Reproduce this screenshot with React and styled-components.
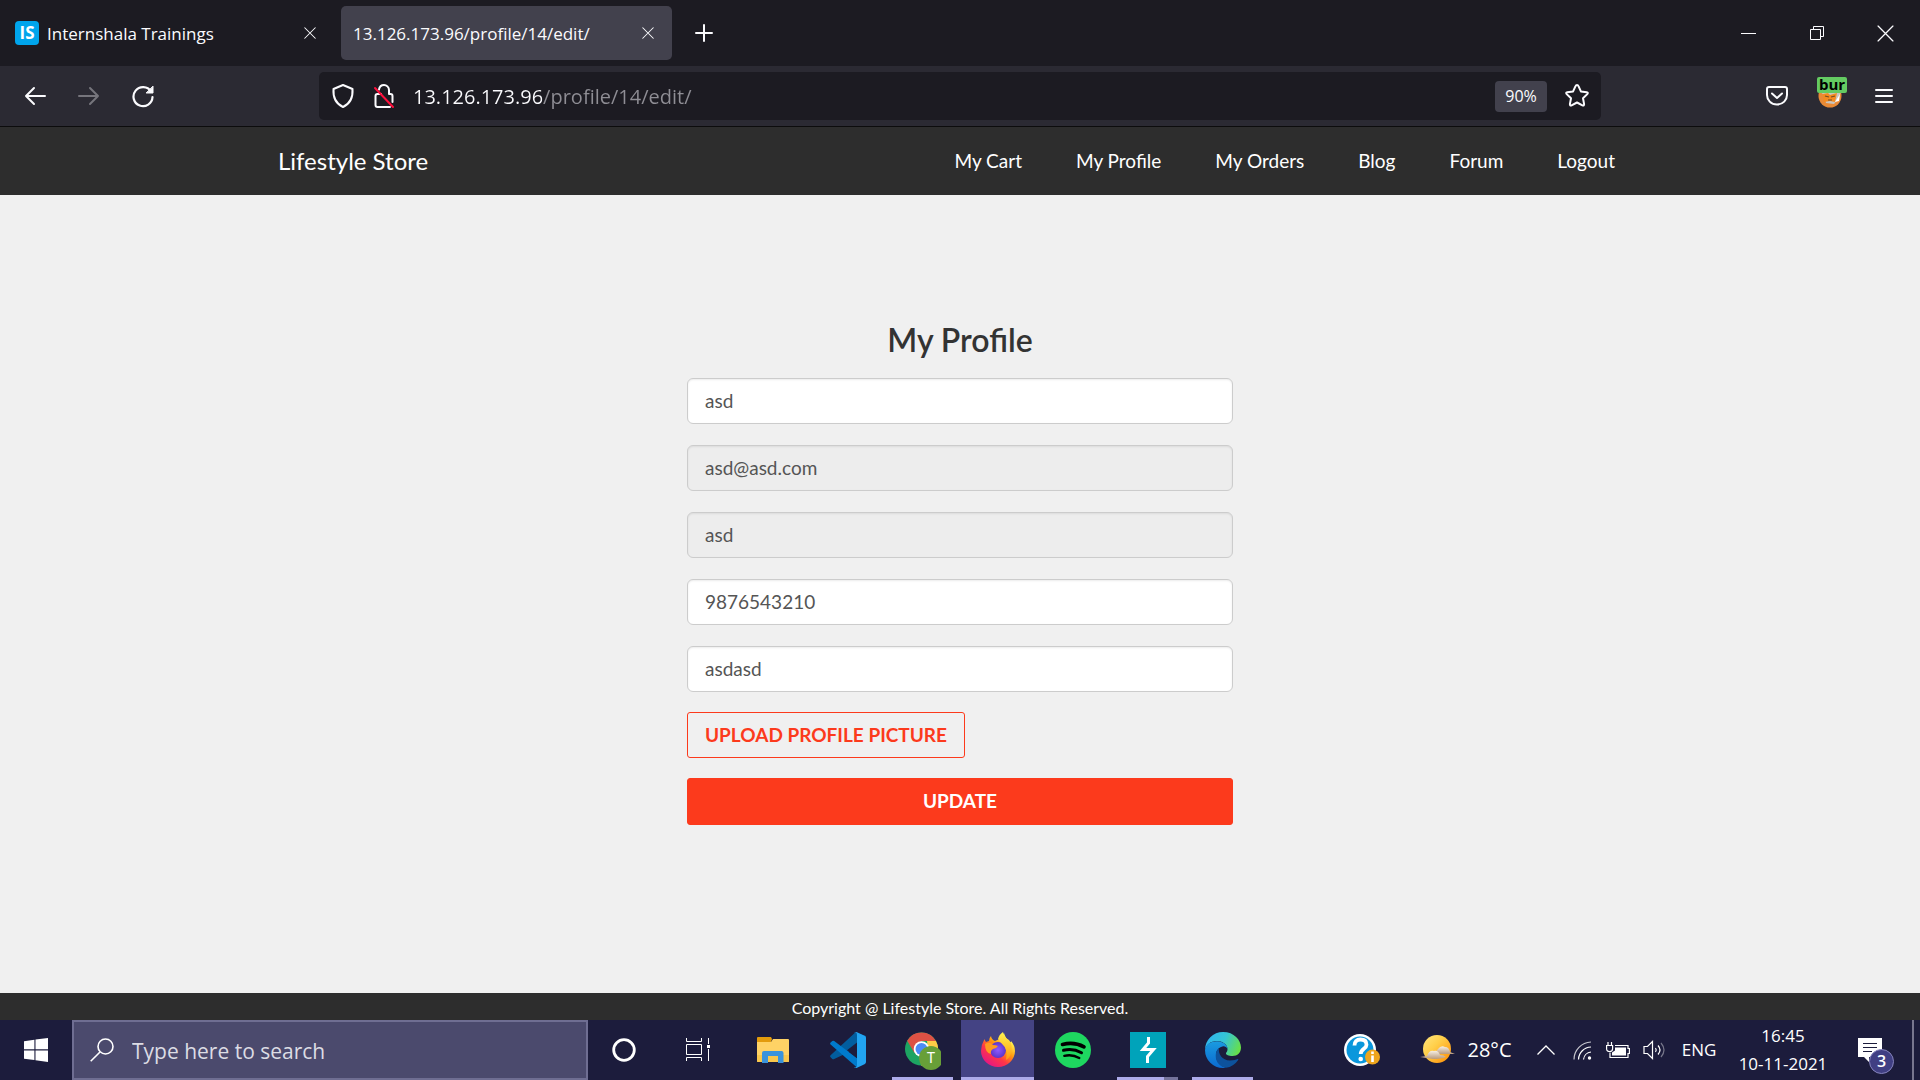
import React from "react";
import styled, { createGlobalStyle } from "styled-components";

const ui = '"Open Sans", "Noto Sans", sans-serif';
const site = 'Lato, "Open Sans", sans-serif';

const Global = createGlobalStyle`
  * { box-sizing: border-box; }
  body { margin: 0; font-family: ${ui}; background: #f0f0f0; }
  button, input { font: inherit; margin: 0; }
  svg { display: block; flex: none; }
`;

const Screen = styled.div`
  min-height: 100vh;
  display: flex;
  flex-direction: column;
`;

/* Browser window */
const TabStrip = styled.div`
  display: flex;
  align-items: center;
  height: 66px;
  background: #1c1b22;
  color: #fbfbfe;
`;
const Tab = styled.div`
  display: flex;
  align-items: center;
  gap: 8px;
  width: ${(p) => (p.$active ? 331 : 327)}px;
  height: 54px;
  margin-right: ${(p) => (p.$active ? 0 : 14)}px;
  padding: ${(p) => (p.$active ? "0 12px" : "0 5px 0 15px")};
  border-radius: 5px;
  background: ${(p) => (p.$active ? "#42414d" : "transparent")};
  font-size: 17px;
`;
const TabTitle = styled.span`
  flex: 1;
  white-space: nowrap;
`;
const Favicon = styled.span`
  width: 24px;
  height: 24px;
  border-radius: 4px;
  background: #00a5ec;
  color: #fff;
  font: 700 17px/24px ${ui};
  text-align: center;
`;
const IconButton = styled.button`
  display: flex;
  align-items: center;
  justify-content: center;
  width: ${(p) => p.$w || 24}px;
  height: ${(p) => p.$h || 24}px;
  padding: 0;
  border: 0;
  background: transparent;
  color: ${(p) => (p.$dim ? "#76757c" : "#fbfbfe")};
`;
const WindowControls = styled.div`
  display: flex;
  margin-left: auto;
`;
const Toolbar = styled.div`
  display: flex;
  align-items: center;
  height: 61px;
  padding: 0 11px 0 8px;
  background: #2b2a33;
  border-bottom: 1px solid #0c0c0d;
`;
const History = styled.div`
  display: flex;
  flex: 0 0 311px;
`;
const AddressBar = styled.div`
  display: flex;
  align-items: center;
  flex: 1;
  max-width: 1282px;
  height: 48px;
  padding: 0 12px;
  border-radius: 5px;
  background: #1c1b22;
`;
const AddressInput = styled.input`
  flex: 1;
  min-width: 0;
  height: 32px;
  padding: 0;
  border: 0;
  outline: 0;
  font-size: 20px;
  color: transparent;
  background: linear-gradient(90deg, #fbfbfe 129px, #8f8e95 129px);
  background-clip: text;
  -webkit-background-clip: text;
`;
const Zoom = styled.button`
  width: 52px;
  height: 31px;
  margin-right: 18px;
  padding: 0;
  border: 0;
  border-radius: 4px;
  background: #42414d;
  color: #fbfbfe;
  font-size: 16px;
`;
const Extensions = styled.div`
  display: flex;
  align-items: center;
  gap: 4px;
  margin-left: auto;
`;
const ExtensionButton = styled(IconButton)`
  position: relative;
`;
const ExtensionBadge = styled.span`
  position: absolute;
  top: -1px;
  left: 12px;
  width: 30px;
  height: 16px;
  border-radius: 2px;
  background: #64cb62;
  color: #000;
  font: 700 15px/15px ${ui};
  text-align: center;
`;

/* Store page */
const Header = styled.header`
  background: #2d2d2d;
`;
const HeaderInner = styled.div`
  display: flex;
  align-items: center;
  justify-content: space-between;
  max-width: 1364px;
  height: 68px;
  margin: 0 auto;
  padding-bottom: 2px;
  font-family: ${site};
`;
const Brand = styled.a`
  color: #fff;
  font-size: 24px;
  text-decoration: none;
`;
const Nav = styled.nav`
  display: flex;
`;
const NavLink = styled.a`
  padding: 0 27px;
  color: #fff;
  font-size: 19px;
  text-decoration: none;
`;
const Main = styled.main`
  flex: 1;
  padding: 122px 20px 0;
  background: #f0f0f0;
  font-family: ${site};
`;
const Form = styled.form`
  display: flex;
  flex-direction: column;
  align-items: flex-start;
  gap: 21px;
  width: 100%;
  max-width: 546px;
  margin: 0 auto;
`;
const Title = styled.h1`
  align-self: center;
  margin: 0 0 -6px;
  color: #333;
  font-size: 32px;
  font-weight: 600;
  line-height: 46px;
`;
const Field = styled.input`
  width: 100%;
  height: 46px;
  padding: 0 17px 2px;
  border: 1px solid #ccc;
  border-radius: 6px;
  background: #fff;
  box-shadow: inset 0 1px 2px rgba(0, 0, 0, 0.08);
  color: #555;
  font-size: 19px;
  &:disabled { background: #ededed; }
`;
const FormButton = styled.button`
  width: ${(p) => (p.$solid ? "100%" : "auto")};
  height: ${(p) => (p.$solid ? 47 : 46)}px;
  margin-top: -1px;
  padding: 0 17px 2px;
  border: 1px solid #fc3a1c;
  border-radius: 3px;
  background: ${(p) => (p.$solid ? "#fc3a1c" : "transparent")};
  color: ${(p) => (p.$solid ? "#fff" : "#fc3a1c")};
  font-size: 19px;
  font-weight: 700;
`;
const Footer = styled.footer`
  height: 27px;
  padding-top: 4px;
  background: #2d2d2d;
  color: #fff;
  font: 16px/22px ${site};
  text-align: center;
`;

/* Taskbar */
const Taskbar = styled.div`
  display: flex;
  height: 60px;
  background: #1c1c3c;
  color: #fff;
`;
const Search = styled.label`
  display: flex;
  align-items: center;
  gap: 18px;
  flex: 0 1 516px;
  padding: 0 16px;
  border: 2px solid #6f6e92;
  background: #4b4a6d;
`;
const SearchInput = styled.input`
  flex: 1;
  min-width: 0;
  padding: 2px 0 0;
  border: 0;
  outline: 0;
  background: transparent;
  color: #fff;
  font-size: 21px;
  &::placeholder { color: #dcdce4; opacity: 1; }
`;
const Apps = styled.div`
  display: flex;
  gap: 2px;
`;
const AppButton = styled.button`
  display: flex;
  flex-direction: column;
  align-items: center;
  justify-content: space-between;
  width: ${(p) => p.$w || 73}px;
  padding: 0;
  border: 0;
  background: ${(p) => (p.$active ? "#444384" : "transparent")};
`;
const AppIcon = styled.span`
  display: flex;
  align-items: center;
  height: 60px;
  margin-bottom: -3px;
`;
const Underline = styled.span`
  width: ${(p) => (p.$full ? "100%" : "61px")};
  height: 3px;
  background: ${(p) => (p.$stacked ? "linear-gradient(90deg, #adabea 47px, #74739b 47px)" : "#adabea")};
`;
const Tray = styled.div`
  display: flex;
  align-items: center;
  margin-left: auto;
`;
const TrayButton = styled.button`
  display: flex;
  align-items: center;
  justify-content: center;
  gap: 12px;
  width: ${(p) => p.$w}px;
  height: 60px;
  padding: 0;
  border: 0;
  background: transparent;
  color: #fff;
  font-size: ${(p) => p.$size || 17}px;
  line-height: 28px;
  white-space: nowrap;
`;
const Desktop = styled.button`
  width: 8px;
  height: 60px;
  padding: 0;
  border: 0;
  border-left: 2px solid #77768f;
  background: transparent;
`;
const NoticeButton = styled(TrayButton)`
  position: relative;
  padding-right: 12px;
`;
const NoticeCount = styled.span`
  position: absolute;
  left: 29px;
  top: 29px;
  width: 25px;
  height: 25px;
  border: 1px solid #8684bd;
  border-radius: 50%;
  background: #403f83;
  font: 600 16px/22px ${ui};
`;

const line = { fill: "none", stroke: "currentColor", strokeWidth: 2, strokeLinecap: "round", strokeLinejoin: "round" };

const Cross = ({ size, w = 1.4 }) => (
  <svg width={size} height={size} viewBox="0 0 16 16" {...line} strokeWidth={w}><path d="M1 1l14 14M15 1L1 15" /></svg>
);
const Plus = () => (
  <svg width="18" height="18" viewBox="0 0 18 18" {...line}><path d="M9 1v16M1 9h16" /></svg>
);
const Minimize = () => (
  <svg width="15" height="15" viewBox="0 0 15 15"><path d="M0 7h15v1H0z" fill="currentColor" /></svg>
);
const Restore = () => (
  <svg width="14" height="14" viewBox="0 0 14 14" fill="none" stroke="currentColor"><path d="M.5 3.500h10v10H.5zM3.500 3.500v-3h10v10h-3" /></svg>
);
const Back = () => (
  <svg width="22" height="20" viewBox="0 0 22 20" {...line}><path d="M10 2L2 10l8 8M2 10h19" /></svg>
);
const Forward = () => (
  <svg width="22" height="20" viewBox="0 0 22 20" {...line}><path d="M12 2l8 8-8 8M20 10H1" /></svg>
);
const Reload = () => (
  <svg width="24" height="24" viewBox="0 0 24 24" {...line} strokeWidth="2.2">
    <path d="M20 7.500A9.500 9.500 0 1 0 21.500 13" /><path d="M22 2.500V9h-6.500z" fill="currentColor" strokeWidth="1" />
  </svg>
);
const Shield = () => (
  <svg width="24" height="26" viewBox="0 0 24 26" {...line}><path d="M12 2l9.500 4C22 13 19.500 20.500 12 24 4.500 20.500 2 13 2.500 6z" /></svg>
);
const Lock = () => (
  <svg width="22" height="26" viewBox="0 0 22 26" {...line}>
    <path d="M6 6.500C6.500 3.500 8.500 2 11 2s5 2 5 5v4h1.500q2 0 2 2v6M8 11H4.500q-2 0-2 2v9q0 2 2 2H17" />
    <path d="M2 5l18 19" stroke="#ff0f3c" />
  </svg>
);
const Star = () => (
  <svg width="26" height="26" viewBox="0 0 26 26" {...line}>
    <path d="M13 2q1 0 1.500 1.200l2.400 5.200 5.800.8q1.900.4.600 1.900l-4.300 4.100 1.100 5.900q.1 2-1.700 1.200L13 19.500l-5.400 2.800q-1.800.8-1.700-1.200L7 15.200l-4.300-4.100q-1.300-1.500.6-1.900l5.800-.8 2.400-5.200Q12 2 13 2z" />
  </svg>
);
const Pocket = () => (
  <svg width="24" height="22" viewBox="0 0 24 22" {...line}>
    <path d="M4 2h16q2 0 2 2v6c0 5-4 9.500-10 9.500S2 15 2 10V4q0-2 2-2z" /><path d="M7 8.500l5 4.500 5-4.500" />
  </svg>
);
const Fox = () => (
  <svg width="24" height="24" viewBox="0 0 24 24">
    <circle cx="12" cy="12" r="11.500" fill="#e98a36" />
    <path d="M1 7l5 4 2 8 8 1 5-6 2-7-4-5H5z" fill="#c9c5bf" />
    <path d="M5 10l5-1 2 2 7-2-2 9-5-1-6 1z" fill="#f58b1f" />
    <path d="M7 12l4 1M13 13l4-1M10 16h4" stroke="#744d26" strokeWidth="1.200" />
    <path d="M17 18l5-8-1 7z" fill="#fff" />
  </svg>
);
const Menu = () => (
  <svg width="18" height="16" viewBox="0 0 18 16" {...line}><path d="M1 2h16M1 8h16M1 14h16" /></svg>
);
const WindowsLogo = () => (
  <svg width="24" height="24" viewBox="0 0 24 24" fill="#fff"><path d="M0 3.300L10.400 1.700V11.300H0zM11.500 1.500L24 0V11.300H11.500zM0 12.400H10.400V22.100L0 20.700zM11.500 12.400H24V24L11.500 22.300z" /></svg>
);
const Magnifier = () => (
  <svg width="24" height="24" viewBox="0 0 24 24" fill="none" stroke="#fff" strokeWidth="1.600"><circle cx="15.500" cy="8.500" r="7.500" /><path d="M10 14L.7 23.300" /></svg>
);
const Cortana = () => (
  <svg width="24" height="24" viewBox="0 0 24 24"><circle cx="12" cy="12" r="10.300" fill="none" stroke="#fff" strokeWidth="2.800" /></svg>
);
const TaskView = () => (
  <svg width="25" height="24" viewBox="0 0 25 24" fill="none" stroke="#fff">
    <path d="M.5 6.500h15v10H.5zM.5 0v3.500h15V0M.5 23v-3.500h15V23M22.500 0v6M22.500 11v12" /><path d="M21 7h3v3h-3z" fill="#fff" stroke="none" />
  </svg>
);
const Folder = () => (
  <svg width="32" height="26" viewBox="0 0 32 26">
    <path d="M0 1q0-1 1-1h13l1 2-1 3H0z" fill="#e39b0c" /><path d="M0 5h14l2-3h15q1 0 1 1v21q0 1-1 1H1q-1 0-1-1z" fill="#ffd265" />
    <path d="M0 18h32v6q0 1-1 1H1q-1 0-1-1z" fill="#f9c74c" />
    <path d="M5 26V16q0-2 2-2h17.500q2 0 2 2v10H21v-7H11v7z" fill="#3a93dc" />
  </svg>
);
const Code = () => (
  <svg width="36" height="36" viewBox="0 0 36 36">
    <path d="M25.500.5L36 4v8L4.200 27q-1 .6-1.900-.1L.6 25.300q-1-1 0-2L24.700 1z" fill="#0065a9" opacity=".9" />
    <path d="M27 35.500L.6 12.600q-1-1 0-2l1.700-1.600q.9-.7 1.900 0L28 27z" fill="#007acc" />
    <path d="M26.500 0l8 3.700Q36 4.500 36 6v24q0 1.500-1.500 2.300l-8 3.700q-1.700.1-2.600-.9 3.100 1.500 3.100-2V3q0-3.500-3-2 1-1 2.500-1z" fill="#22a4f1" />
    <path d="M27 10.500V26l-10-7.800z" fill="#1c1c3c" />
  </svg>
);
const Chrome = () => (
  <svg width="36" height="39" viewBox="0 0 36 39">
    <circle cx="16.500" cy="18" r="16.500" fill="#1da462" />
    <path d="M2.200 9.700A16.500 16.500 0 0 1 31 10H16.500L9.500 22z" fill="#dd5144" />
    <path d="M31 10A16.500 16.500 0 0 1 16 34.500L23.500 22 22 10z" fill="#ffcd46" />
    <circle cx="16.500" cy="18" r="7.800" fill="#fff" /><circle cx="16.500" cy="18" r="6" fill="#4c8bf5" />
    <circle cx="26" cy="27" r="12" fill="#689f38" />
    <text x="26" y="32" textAnchor="middle" fontSize="14" fontFamily="Roboto, sans-serif" fill="#fff">T</text>
  </svg>
);
const Firefox = () => (
  <svg width="34" height="36" viewBox="0 0 34 36">
    <defs>
      <linearGradient id="fxBody" x1=".85" y1=".1" x2=".2" y2=".95"><stop offset=".1" stopColor="#fff44f" /><stop offset=".4" stopColor="#ff980e" /><stop offset=".65" stopColor="#ff3647" /><stop offset="1" stopColor="#e31587" /></linearGradient>
      <radialGradient id="fxGlobe"><stop offset="0" stopColor="#9059ff" /><stop offset="1" stopColor="#5b36c9" /></radialGradient>
      <linearGradient id="fxFlame" x1="0" y1="0" x2="0" y2="1"><stop offset="0" stopColor="#fff44f" /><stop offset="1" stopColor="#ff980e" /></linearGradient>
    </defs>
    <path d="M3.500 7q.5 2 1.500 3l3-1q0-3 2-5 .5 3.500 4 5l7-3Q22 2 23 1q1 5 6 9 1 .5 1-1 4 4.500 4 10A17 16 0 0 1 0 19q0-6 3.500-12z" fill="url(#fxBody)" />
    <circle cx="17" cy="18" r="8" fill="url(#fxGlobe)" />
    <path d="M17 7q1-4.500 5-7 1 5 6 8 4 5 2 13-1 5-5 7 2-11-3-15-3-3-5-6z" fill="url(#fxFlame)" />
    <path d="M4 12q5-3 8 1 3 0 5 1-2 3-5 3-3 2-2 5-6-1-6-10z" fill="#ff9a20" />
  </svg>
);
const Spotify = () => (
  <svg width="36" height="36" viewBox="0 0 36 36" fill="none" stroke="#000" strokeLinecap="round">
    <circle cx="18" cy="18" r="18" fill="#1ed760" stroke="none" />
    <path d="M7.500 12.500q11.500-3 21.500 2.300" strokeWidth="3.600" /><path d="M8.500 18.300q9.500-2.300 18 2.400" strokeWidth="3" /><path d="M9.300 23.800q8-1.900 15 2.200" strokeWidth="2.400" />
  </svg>
);
const Burp = () => (
  <svg width="36" height="36" viewBox="0 0 36 36"><path d="M0 0h36v36H0z" fill="#00a3ba" /><path d="M18.500 5v6L13 17.500h10.500L17.500 24.500V31" fill="none" stroke="#fff" strokeWidth="3" /></svg>
);
const Edge = () => (
  <svg width="36" height="36" viewBox="0 0 36 36">
    <defs>
      <linearGradient id="edTop" x1="0" y1=".3" x2="1" y2=".6"><stop offset="0" stopColor="#2fb5ef" /><stop offset=".5" stopColor="#35c4d5" /><stop offset="1" stopColor="#68e047" /></linearGradient>
      <linearGradient id="edSide" x1="0" y1="0" x2="0" y2="1"><stop offset="0" stopColor="#1a9be0" /><stop offset="1" stopColor="#0b6ad0" /></linearGradient>
    </defs>
    <path d="M0 18A18 18 0 0 1 18 0C29 0 36 8 36 15.500c0 5-3.500 8.500-8.500 8.500-4 0-6.500-1.300-6.500-2.500s1.500-1.500 1.500-4.500C22.500 12 17 9 12 9 5 9 1 13 0 18z" fill="url(#edTop)" />
    <path d="M0 18C1 12 6 9.300 12 9.300c6 0 10.500 3.700 10.500 7.700-1-2-3-3-5-2.500C13 15.500 11 19 11 23c0 7 5 11 9.500 12.800Q19 36 18 36A18 18 0 0 1 0 18z" fill="url(#edSide)" />
    <path d="M14 16.500c-1 5 3 12 11 12 4 0 6-1 7.500-1.500 1-.3 1 .5.500 1.200A18 18 0 0 1 21 35.800C15 35 10.700 30 10.700 24c0-3.500 1-6 3.300-7.500z" fill="#0d529c" />
  </svg>
);
const Help = () => (
  <svg width="36" height="32" viewBox="0 0 36 32">
    <circle cx="16" cy="16" r="16" fill="#fff" /><circle cx="16" cy="16" r="13.500" fill="#0a97dc" />
    <path d="M10.500 11.500q0-6 6-6t6 5.200c0 4-5.800 4.300-5.800 9.300" fill="none" stroke="#fff" strokeWidth="3.800" /><circle cx="16.700" cy="25" r="2.300" fill="#fff" />
    <circle cx="28.500" cy="23" r="7.500" fill="#eea51d" /><path d="M27.200 21.500h2.600V28h-2.600zM27.200 17.500h2.600V20h-2.600z" fill="#fff" />
  </svg>
);
const Weather = () => (
  <svg width="35" height="30" viewBox="0 0 35 30">
    <defs>
      <linearGradient id="sun" x1="0" y1="0" x2="1" y2="1"><stop offset="0" stopColor="#ffe680" /><stop offset=".4" stopColor="#ffcf4a" /><stop offset="1" stopColor="#ff8a00" /></linearGradient>
      <linearGradient id="cloud" x1="0" y1="0" x2="0" y2="1"><stop offset="0" stopColor="#f6efe4" /><stop offset="1" stopColor="#b99a7c" /></linearGradient>
    </defs>
    <circle cx="17" cy="14" r="14" fill="url(#sun)" />
    <path d="M14 19l4-5q3-4 7-2 4 0 5 5l5 2z" fill="url(#cloud)" /><path d="M0 22l7-1q2-6 7-5 4-1 6 4 4 0 6 2-5 2-13 2z" fill="url(#cloud)" />
  </svg>
);
const Chevron = () => (
  <svg width="18" height="10" viewBox="0 0 18 10" fill="none" stroke="#fff" strokeWidth="1.300"><path d="M.5 9.500L9 1l8.500 8.500" /></svg>
);
const Wifi = () => (
  <svg width="19" height="19" viewBox="0 0 19 19" fill="none" stroke="#fff" strokeWidth="1.200">
    <path d="M1 18.500A17.500 17.500 0 0 1 18 1" opacity=".75" /><path d="M5.500 18.500A13 13 0 0 1 18 6M10.500 18.500A8.500 8.500 0 0 1 18 11" /><circle cx="16.500" cy="17" r="1.700" fill="#fff" stroke="none" />
  </svg>
);
const Battery = () => (
  <svg width="24" height="17" viewBox="0 0 24 17" fill="none" stroke="#fff" strokeWidth="1.200">
    <path d="M9 3.500h13v3h1.400v5H22v4H4v-5M.6 3.500h6v3.200q0 2.800-3 2.800t-3-2.800zM2 3.500V0M5.500 3.500V0" /><path d="M9 5.500h11v8H6v-3l3-2z" fill="#fff" stroke="none" />
  </svg>
);
const Speaker = () => (
  <svg width="23" height="20" viewBox="0 0 23 20" fill="none" stroke="#fff" strokeWidth="1.200">
    <path d="M1 6.500h3.500L9.500 1.500v17l-5-5H1zM12.500 8q1.500 2 0 4M15 5.500q4 4.500 0 9" /><path d="M18 3q6 7 0 14" opacity=".4" />
  </svg>
);
const Notice = () => (
  <svg width="24" height="24" viewBox="0 0 24 24"><path d="M0 0h24v19H11v5l-5-5H0z" fill="#fff" /><path d="M5 5.500h14M5 9.500h14M5 13.500h9" stroke="#1c1c3c" /></svg>
);

const navItems = ["My Cart", "My Profile", "My Orders", "Blog", "Forum", "Logout"];
const fields = [
  { label: "Name", value: "asd" },
  { label: "Email", value: "asd@asd.com", type: "email", disabled: true },
  { label: "Username", value: "asd", disabled: true },
  { label: "Phone", value: "9876543210", type: "tel" },
  { label: "Address", value: "asdasd" },
];
const apps = [
  { name: "Cortana", Icon: Cortana, width: 72 },
  { name: "Task View", Icon: TaskView, width: 72 },
  { name: "File Explorer", Icon: Folder },
  { name: "Visual Studio Code", Icon: Code },
  { name: "Chrome", Icon: Chrome, open: true },
  { name: "Firefox", Icon: Firefox, open: true, active: true },
  { name: "Spotify", Icon: Spotify },
  { name: "Burp Suite", Icon: Burp, open: true, stacked: true },
  { name: "Edge", Icon: Edge, open: true },
];

export default function App() {
  return (
    <Screen>
      <Global />
      <TabStrip>
        <Tab>
          <Favicon>IS</Favicon>
          <TabTitle>Internshala Trainings</TabTitle>
          <IconButton aria-label="Close tab"><Cross size={12} /></IconButton>
        </Tab>
        <Tab $active>
          <TabTitle>13.126.173.96/profile/14/edit/</TabTitle>
          <IconButton aria-label="Close tab"><Cross size={12} /></IconButton>
        </Tab>
        <IconButton $w={64} $h={54} aria-label="New tab"><Plus /></IconButton>
        <WindowControls>
          <IconButton $w={69} $h={66} aria-label="Minimize"><Minimize /></IconButton>
          <IconButton $w={68} $h={66} aria-label="Restore"><Restore /></IconButton>
          <IconButton $w={69} $h={66} aria-label="Close window"><Cross size={17} w={1.2} /></IconButton>
        </WindowControls>
      </TabStrip>
      <Toolbar>
        <History>
          <IconButton $w={54} $h={48} aria-label="Back"><Back /></IconButton>
          <IconButton $w={54} $h={48} $dim aria-label="Forward"><Forward /></IconButton>
          <IconButton $w={54} $h={48} aria-label="Reload"><Reload /></IconButton>
        </History>
        <AddressBar>
          <IconButton aria-label="Tracking protection"><Shield /></IconButton>
          <IconButton $w={58} aria-label="Connection is not secure"><Lock /></IconButton>
          <AddressInput aria-label="Address" defaultValue="13.126.173.96/profile/14/edit/" />
          <Zoom>90%</Zoom>
          <IconButton aria-label="Bookmark"><Star /></IconButton>
        </AddressBar>
        <Extensions>
          <IconButton $w={48} $h={48} aria-label="Save to Pocket"><Pocket /></IconButton>
          <ExtensionButton $w={50} $h={36} aria-label="Proxy extension"><Fox /><ExtensionBadge>bur</ExtensionBadge></ExtensionButton>
          <IconButton $w={50} $h={48} aria-label="Menu"><Menu /></IconButton>
        </Extensions>
      </Toolbar>

      <Header>
        <HeaderInner>
          <Brand href="#">Lifestyle Store</Brand>
          <Nav>{navItems.map((item) => <NavLink key={item} href="#">{item}</NavLink>)}</Nav>
        </HeaderInner>
      </Header>
      <Main>
        <Form onSubmit={(e) => e.preventDefault()}>
          <Title>My Profile</Title>
          {fields.map(({ label, value, ...rest }) => (
            <Field key={label} aria-label={label} defaultValue={value} {...rest} />
          ))}
          <FormButton type="button">UPLOAD PROFILE PICTURE</FormButton>
          <FormButton $solid type="submit">UPDATE</FormButton>
        </Form>
      </Main>
      <Footer>Copyright @ Lifestyle Store. All Rights Reserved.</Footer>

      <Taskbar>
        <TrayButton $w={72} aria-label="Start"><WindowsLogo /></TrayButton>
        <Search>
          <Magnifier />
          <SearchInput aria-label="Search" placeholder="Type here to search" />
        </Search>
        <Apps>
          {apps.map(({ name, Icon, open, active, stacked, width }) => (
            <AppButton key={name} $active={active} $w={width} aria-label={name}>
              <AppIcon><Icon /></AppIcon>
              {open && <Underline $full={active} $stacked={stacked} />}
            </AppButton>
          ))}
        </Apps>
        <Tray>
          <TrayButton $w={84} aria-label="Help"><Help /></TrayButton>
          <TrayButton $w={124} $size={20}><Weather />28°C</TrayButton>
          <TrayButton $w={36} aria-label="Hidden icons"><Chevron /></TrayButton>
          <TrayButton $w={36} aria-label="Network"><Wifi /></TrayButton>
          <TrayButton $w={36} aria-label="Battery"><Battery /></TrayButton>
          <TrayButton $w={36} aria-label="Volume"><Speaker /></TrayButton>
          <TrayButton $w={54}>ENG</TrayButton>
          <TrayButton $w={114}>16:45<br />10-11-2021</TrayButton>
          <NoticeButton $w={72} aria-label="Notifications"><Notice /><NoticeCount>3</NoticeCount></NoticeButton>
          <Desktop aria-label="Show desktop" />
        </Tray>
      </Taskbar>
    </Screen>
  );
}
